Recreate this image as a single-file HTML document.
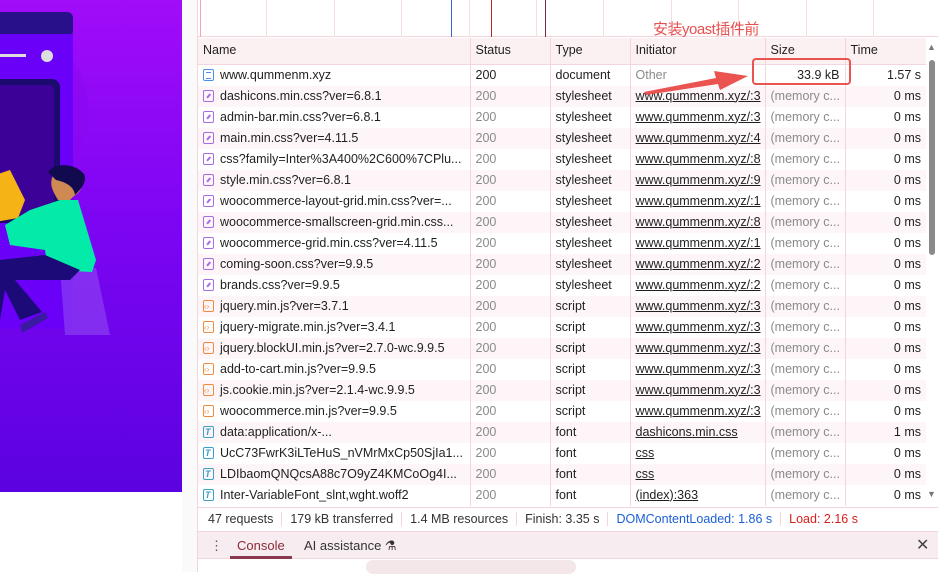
<!DOCTYPE html>
<html><head><meta charset="utf-8"><style>
*{margin:0;padding:0;box-sizing:border-box}
body{width:938px;height:572px;overflow:hidden;background:#fff;font-family:"Liberation Sans","Noto Sans CJK SC",sans-serif;font-size:12.5px;color:#1f1f1f;position:relative}
.hero{position:absolute;left:0;top:0;width:182px;height:492px;background:linear-gradient(180deg,#a10cf9 0%,#7d05f3 45%,#5b02e0 100%);overflow:hidden}
.gap{position:absolute;left:182px;top:0;width:15px;height:572px;background:#fafafa}
.dt{position:absolute;left:197px;top:0;width:741px;height:572px;background:#fff;border-left:1px solid #f3d6dc}
.wf{position:absolute;left:0;top:0;width:741px;height:37px;border-bottom:1px solid #f3d6dc}
.vl{position:absolute;top:0;height:37px;width:1px;background:#f6dde2}
table{position:absolute;left:0;top:38px;border-collapse:collapse;table-layout:fixed;width:728px}
td,th{height:21px;padding:0 5px;white-space:nowrap;overflow:hidden;text-overflow:clip;border-left:1px solid #f3d6dc;font-weight:normal;text-align:left;line-height:21px}
th{height:26px;background:#fbf0f2;border-bottom:1px solid #f3d6dc}
td:first-child,th:first-child{border-left:none}
tr:nth-child(even) td{background:#fff}
tr:nth-child(odd) td{background:#fdf5f7}
.g{color:#8a8a8a}
.u{text-decoration:underline}
.r{text-align:right}
.ic{display:inline-block;width:11px;height:12px;border:1.5px solid #a66ce6;border-radius:2px;vertical-align:-2px;margin-right:6px;position:relative}
.ic.css::after{content:"";position:absolute;left:2px;top:4px;width:5px;height:1.5px;background:#a66ce6;transform:rotate(-50deg)}
.ic.doc{border-color:#4d8ef0}
.ic.doc::after{content:"";position:absolute;left:1.5px;top:2px;width:5px;height:5px;border-top:1px solid #4d8ef0;border-bottom:1px solid #4d8ef0}
.ic.js{border-color:#f08a3c}
.ic.js::after{content:"‹›";position:absolute;left:0;top:-5px;font-size:8px;color:#f08a3c}
.ic.ft{border-color:#3aa0c9}
.ic.ft::after{content:"T";position:absolute;left:1px;top:-5px;font-size:9px;font-weight:bold;color:#3aa0c9}
.sum{position:absolute;left:0;top:507px;width:741px;height:23px;border-top:1px solid #f3d6dc;line-height:23px;padding-left:10px;color:#333}
.sum span{padding:0 8px;border-left:1px solid #f3d6dc}
.sum span:first-child{border:none;padding-left:0}
.tabs{position:absolute;left:0;top:531px;width:741px;height:28px;background:#f7ecef;border-top:1px solid #f3d6dc;border-bottom:1px solid #f3d6dc;line-height:28px;font-size:13px}
.tb{position:absolute;left:0;top:560px;width:741px;height:12px;background:#fff}
</style></head><body>
<div class="hero">
<svg width="182" height="492" viewBox="0 0 182 492">
<circle cx="0" cy="110" r="88" fill="#8a07ee" opacity=".5"/>
<rect x="-20" y="12" width="93" height="25" rx="6" fill="#27108a"/>
<rect x="-20" y="34" width="93" height="295" fill="#6a00f8"/>
<rect x="-20" y="54" width="46" height="3" fill="#ddd"/>
<circle cx="47" cy="56" r="6" fill="#ddd"/>
<rect x="-20" y="79" width="80" height="144" rx="8" fill="#1d0a6e"/>
<rect x="-20" y="85" width="74" height="132" rx="5" fill="#3c0298"/>
<path d="M50 268 L60 268 L65 335 L110 335 L96 268 Z" fill="#8c3ef2" opacity=".7"/>
<path d="M-5 175 L10 170 L25 200 L18 218 L-5 222 Z" fill="#f5b316"/>
<path d="M5 225 L30 210 L60 200 L78 200 L96 260 L92 272 L48 270 L45 250 L10 245 Z" fill="#04eba9"/>
<path d="M0 260 L45 255 L80 270 L70 280 L15 280 L42 312 L20 320 L5 290 L0 320 Z" fill="#1c0a78"/>
<path d="M52 178 C55 168 70 165 80 172 C86 180 82 192 74 196 L70 200 L58 200 C52 190 50 185 52 178 Z" fill="#cf8a54"/>
<path d="M48 172 C55 162 75 163 84 174 C88 182 80 190 75 195 C74 186 65 182 56 180 Z" fill="#120a4e"/>
<path d="M20 325 L45 312 L48 318 L22 333 Z" fill="#3a1aa0"/>
</svg>
</div>
<div class="gap"></div>
<div class="dt">
<div class="wf">
<div class="vl" style="left:2px;background:#f4a4b4"></div>
<div class="vl" style="left:68px"></div><div class="vl" style="left:136px"></div>
<div class="vl" style="left:203px"></div><div class="vl" style="left:271px"></div>
<div class="vl" style="left:338px"></div><div class="vl" style="left:405px"></div>
<div class="vl" style="left:473px"></div><div class="vl" style="left:540px"></div>
<div class="vl" style="left:608px"></div><div class="vl" style="left:675px"></div>
<div class="vl" style="left:253px;background:#3860d8"></div>
<div class="vl" style="left:293px;background:#b42828"></div>
<div class="vl" style="left:347px;background:#7a2a3a"></div>
<div style="position:absolute;left:455px;top:18px;color:#e8504f;font-size:15px;letter-spacing:-.5px">安装yoast插件前</div>
</div>
<table>
<colgroup><col style="width:272px"><col style="width:80px"><col style="width:80px"><col style="width:135px"><col style="width:80px"><col style="width:81px"></colgroup>
<tr><th>Name</th><th>Status</th><th>Type</th><th>Initiator</th><th>Size</th><th>Time</th></tr>
<tr><td><i class="ic doc"></i>www.qummenm.xyz</td><td>200</td><td>document</td><td class="g">Other</td><td class="r">33.9 kB</td><td class="r">1.57 s</td></tr>
<tr><td><i class="ic css"></i>dashicons.min.css?ver=6.8.1</td><td class="g">200</td><td>stylesheet</td><td class="u">www.qummenm.xyz/:3</td><td class="g">(memory c...</td><td class="r">0 ms</td></tr>
<tr><td><i class="ic css"></i>admin-bar.min.css?ver=6.8.1</td><td class="g">200</td><td>stylesheet</td><td class="u">www.qummenm.xyz/:3</td><td class="g">(memory c...</td><td class="r">0 ms</td></tr>
<tr><td><i class="ic css"></i>main.min.css?ver=4.11.5</td><td class="g">200</td><td>stylesheet</td><td class="u">www.qummenm.xyz/:4</td><td class="g">(memory c...</td><td class="r">0 ms</td></tr>
<tr><td><i class="ic css"></i>css?family=Inter%3A400%2C600%7CPlu...</td><td class="g">200</td><td>stylesheet</td><td class="u">www.qummenm.xyz/:8</td><td class="g">(memory c...</td><td class="r">0 ms</td></tr>
<tr><td><i class="ic css"></i>style.min.css?ver=6.8.1</td><td class="g">200</td><td>stylesheet</td><td class="u">www.qummenm.xyz/:9</td><td class="g">(memory c...</td><td class="r">0 ms</td></tr>
<tr><td><i class="ic css"></i>woocommerce-layout-grid.min.css?ver=...</td><td class="g">200</td><td>stylesheet</td><td class="u">www.qummenm.xyz/:1</td><td class="g">(memory c...</td><td class="r">0 ms</td></tr>
<tr><td><i class="ic css"></i>woocommerce-smallscreen-grid.min.css...</td><td class="g">200</td><td>stylesheet</td><td class="u">www.qummenm.xyz/:8</td><td class="g">(memory c...</td><td class="r">0 ms</td></tr>
<tr><td><i class="ic css"></i>woocommerce-grid.min.css?ver=4.11.5</td><td class="g">200</td><td>stylesheet</td><td class="u">www.qummenm.xyz/:1</td><td class="g">(memory c...</td><td class="r">0 ms</td></tr>
<tr><td><i class="ic css"></i>coming-soon.css?ver=9.9.5</td><td class="g">200</td><td>stylesheet</td><td class="u">www.qummenm.xyz/:2</td><td class="g">(memory c...</td><td class="r">0 ms</td></tr>
<tr><td><i class="ic css"></i>brands.css?ver=9.9.5</td><td class="g">200</td><td>stylesheet</td><td class="u">www.qummenm.xyz/:2</td><td class="g">(memory c...</td><td class="r">0 ms</td></tr>
<tr><td><i class="ic js"></i>jquery.min.js?ver=3.7.1</td><td class="g">200</td><td>script</td><td class="u">www.qummenm.xyz/:3</td><td class="g">(memory c...</td><td class="r">0 ms</td></tr>
<tr><td><i class="ic js"></i>jquery-migrate.min.js?ver=3.4.1</td><td class="g">200</td><td>script</td><td class="u">www.qummenm.xyz/:3</td><td class="g">(memory c...</td><td class="r">0 ms</td></tr>
<tr><td><i class="ic js"></i>jquery.blockUI.min.js?ver=2.7.0-wc.9.9.5</td><td class="g">200</td><td>script</td><td class="u">www.qummenm.xyz/:3</td><td class="g">(memory c...</td><td class="r">0 ms</td></tr>
<tr><td><i class="ic js"></i>add-to-cart.min.js?ver=9.9.5</td><td class="g">200</td><td>script</td><td class="u">www.qummenm.xyz/:3</td><td class="g">(memory c...</td><td class="r">0 ms</td></tr>
<tr><td><i class="ic js"></i>js.cookie.min.js?ver=2.1.4-wc.9.9.5</td><td class="g">200</td><td>script</td><td class="u">www.qummenm.xyz/:3</td><td class="g">(memory c...</td><td class="r">0 ms</td></tr>
<tr><td><i class="ic js"></i>woocommerce.min.js?ver=9.9.5</td><td class="g">200</td><td>script</td><td class="u">www.qummenm.xyz/:3</td><td class="g">(memory c...</td><td class="r">0 ms</td></tr>
<tr><td><i class="ic ft"></i>data:application/x-...</td><td class="g">200</td><td>font</td><td class="u">dashicons.min.css</td><td class="g">(memory c...</td><td class="r">1 ms</td></tr>
<tr><td><i class="ic ft"></i>UcC73FwrK3iLTeHuS_nVMrMxCp50SjIa1...</td><td class="g">200</td><td>font</td><td class="u">css</td><td class="g">(memory c...</td><td class="r">0 ms</td></tr>
<tr><td><i class="ic ft"></i>LDIbaomQNQcsA88c7O9yZ4KMCoOg4I...</td><td class="g">200</td><td>font</td><td class="u">css</td><td class="g">(memory c...</td><td class="r">0 ms</td></tr>
<tr><td><i class="ic ft"></i>Inter-VariableFont_slnt,wght.woff2</td><td class="g">200</td><td>font</td><td class="u">(index):363</td><td class="g">(memory c...</td><td class="r">0 ms</td></tr>
</table>
<div style="position:absolute;left:731px;top:60px;width:6px;height:195px;background:#8a8a8a;border-radius:3px"></div>
<div style="position:absolute;left:729px;top:42px;font-size:9px;color:#777">▲</div>
<div style="position:absolute;left:729px;top:489px;font-size:9px;color:#777">▼</div>
<div style="position:absolute;left:554px;top:58px;width:99px;height:27px;border:2.5px solid #ea5350;border-radius:4px"></div>
<svg style="position:absolute;left:440px;top:66px" width="120" height="30"><path d="M6 26 L78 12 L76 5 L110 10 L82 24 L80 18 L8 29 Z" fill="#ea5350"/></svg>
<div class="sum"><span>47 requests</span><span>179 kB transferred</span><span>1.4 MB resources</span><span>Finish: 3.35 s</span><span style="color:#1a5fd8">DOMContentLoaded: 1.86 s</span><span style="color:#d42020">Load: 2.16 s</span></div>
<div class="tabs"><span style="position:absolute;left:12px;top:0;color:#555">⋮</span><span style="position:absolute;left:32px;top:0;height:27px;padding:0 7px;color:#8b2a3c;border-bottom:3px solid #8b3a4e">Console</span><span style="position:absolute;left:106px;color:#333">AI assistance ⚗</span><span style="position:absolute;left:718px;color:#444;font-size:16px">✕</span></div>
<div class="tb"><span style="position:absolute;left:168px;top:0;width:210px;height:14px;background:#f3e7ea;border-radius:8px"></span></div>
</div>
</body></html>
